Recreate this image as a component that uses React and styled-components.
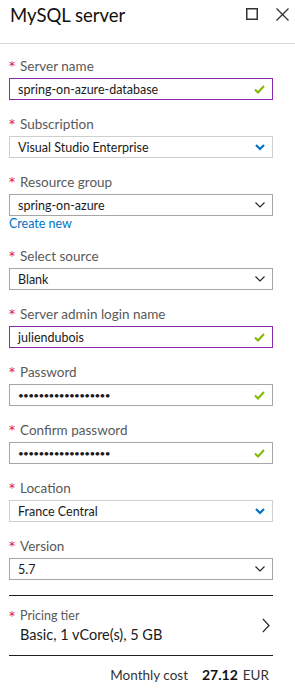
import React from "react";
import styled, { createGlobalStyle } from "styled-components";

const Global = createGlobalStyle`
  html, body { margin: 0; padding: 0; background: #fff; }
  body { font-family: "Segoe UI", Lato, "Open Sans", sans-serif; color: #000; }
  * { box-sizing: border-box; }
`;

const Blade = styled.div`
  width: 295px;
  height: 694px;
  background: #fff;
  overflow: hidden;
`;

const Header = styled.header`
  height: 44px;
  border-bottom: 1px solid #d6d6d6;
  display: flex;
  align-items: flex-start;
  justify-content: space-between;
  padding: 0 6px 0 10px;
`;

const Title = styled.h1`
  margin: 0;
  padding-top: 3px;
  font-size: 18.5px;
  font-weight: 400;
  line-height: 24px;
  color: #111;
`;

const HeaderIcons = styled.div`
  display: flex;
  gap: 18px;
  padding-top: 8px;
`;

const Form = styled.div`
  padding: 13px 22px 0 9px;
  display: flex;
  flex-direction: column;
`;

const Field = styled.div`
  display: flex;
  flex-direction: column;
  margin-bottom: ${(p) => (p.$tight ? "0" : "15px")};
`;

const Label = styled.div`
  display: flex;
  align-items: center;
  height: 18px;
  margin-bottom: 3px;
  font-size: 13.5px;
  color: #595959;
`;

const Star = styled.span`
  color: #e81123;
  width: 11px;
  font-family: "DejaVu Sans", sans-serif;
  font-size: 12px;
  line-height: 1;
  position: relative;
  top: 0;
`;

const Box = styled.div`
  height: 22px;
  border: 1px solid ${(p) => p.$border};
  display: flex;
  align-items: center;
  justify-content: space-between;
  padding: 0 7px 0 8px;
  font-size: 12.5px;
  color: #1a1a1a;
`;

const Dots = styled.span`
  letter-spacing: -0.7px;
  font-size: 10px;
`;

const Link = styled.a`
  color: #0072c6;
  font-size: 12.5px;
  line-height: 16px;
  height: 16px;
  margin-bottom: 15px;
  text-decoration: none;
  display: block;
`;

const Divider = styled.hr`
  margin: 0 22px 0 9px;
  border: 0;
  border-top: 1px solid #1e1e1e;
  height: 0;
`;

const Pricing = styled.div`
  display: flex;
  align-items: center;
  justify-content: space-between;
  height: 59px;
  padding: 0 25px 0 9px;
`;

const PricingText = styled.div`
  display: flex;
  flex-direction: column;
  padding-bottom: 0;
`;

const SmallLabel = styled.div`
  display: flex;
  align-items: center;
  font-size: 12.5px;
  color: #595959;
  height: 18px;
`;

const PricingValue = styled.div`
  font-size: 14.5px;
  color: #1a1a1a;
  padding-left: 11px;
  line-height: 20px;
`;

const Cost = styled.div`
  display: flex;
  justify-content: flex-end;
  align-items: baseline;
  padding: 10px 26px 0 0;
  font-size: 13.5px;
  color: #333;
`;

const Amount = styled.b`
  font-weight: 700;
  font-size: 14px;
  margin-left: 14px;
  margin-right: 5px;
  color: #111;
`;

const Check = () => (
  <svg width="11" height="9" viewBox="0 0 11 9">
    <path d="M1 4.5 L4 7.5 L10 1" fill="none" stroke="#7fba00" strokeWidth="2" />
  </svg>
);

const ChevronThin = () => (
  <svg width="10" height="6" viewBox="0 0 10 6">
    <path d="M0.5 0.5 L5 5 L9.5 0.5" fill="none" stroke="#222" strokeWidth="1.1" />
  </svg>
);

const ChevronBlue = () => (
  <svg width="10" height="7" viewBox="0 0 10 7">
    <path d="M1 1 L5 5 L9 1" fill="none" stroke="#0072c6" strokeWidth="2.2" />
  </svg>
);

const ChevronRight = () => (
  <svg width="8" height="15" viewBox="0 0 8 15">
    <path d="M0.8 0.8 L7 7.5 L0.8 14.2" fill="none" stroke="#222" strokeWidth="1.2" />
  </svg>
);

const MaxIcon = () => (
  <svg width="12" height="12" viewBox="0 0 12 12">
    <rect x="0.75" y="0.75" width="10.5" height="10.5" fill="none" stroke="#333" strokeWidth="1.5" />
  </svg>
);

const CloseIcon = () => (
  <svg width="13" height="13" viewBox="0 0 13 13">
    <path d="M0.5 0.5 L12.5 12.5 M12.5 0.5 L0.5 12.5" fill="none" stroke="#333" strokeWidth="1.3" />
  </svg>
);

const fields = [
  { label: "Server name", value: "spring-on-azure-database", border: "#8a2aa8", icon: "check" },
  { label: "Subscription", value: "Visual Studio Enterprise", border: "#cfcfcf", icon: "blue" },
  { label: "Resource group", value: "spring-on-azure", border: "#a6a6a6", icon: "thin", link: "Create new" },
  { label: "Select source", value: "Blank", border: "#a6a6a6", icon: "thin" },
  { label: "Server admin login name", value: "juliendubois", border: "#8a2aa8", icon: "check" },
  { label: "Password", dots: true, border: "#a6a6a6", icon: "check" },
  { label: "Confirm password", dots: true, border: "#a6a6a6", icon: "check" },
  { label: "Location", value: "France Central", border: "#cfcfcf", icon: "blue" },
  { label: "Version", value: "5.7", border: "#a6a6a6", icon: "thin" },
];

const icons = { check: <Check />, blue: <ChevronBlue />, thin: <ChevronThin /> };

export default function App() {
  return (
    <Blade>
      <Global />
      <Header>
        <Title>MySQL server</Title>
        <HeaderIcons>
          <MaxIcon />
          <CloseIcon />
        </HeaderIcons>
      </Header>
      <Form>
        {fields.map((f) => (
          <React.Fragment key={f.label}>
            <Field $tight={!!f.link}>
              <Label>
                <Star>*</Star>
                {f.label}
              </Label>
              <Box $border={f.border}>
                {f.dots ? <Dots>••••••••••••••••••</Dots> : <span>{f.value}</span>}
                {icons[f.icon]}
              </Box>
            </Field>
            {f.link && <Link href="#">{f.link}</Link>}
          </React.Fragment>
        ))}
      </Form>
      <Divider />
      <Pricing>
        <PricingText>
          <SmallLabel>
            <Star>*</Star>
            Pricing tier
          </SmallLabel>
          <PricingValue>Basic, 1 vCore(s), 5 GB</PricingValue>
        </PricingText>
        <ChevronRight />
      </Pricing>
      <Divider />
      <Cost>
        Monthly cost<Amount>27.12</Amount>EUR
      </Cost>
    </Blade>
  );
}
